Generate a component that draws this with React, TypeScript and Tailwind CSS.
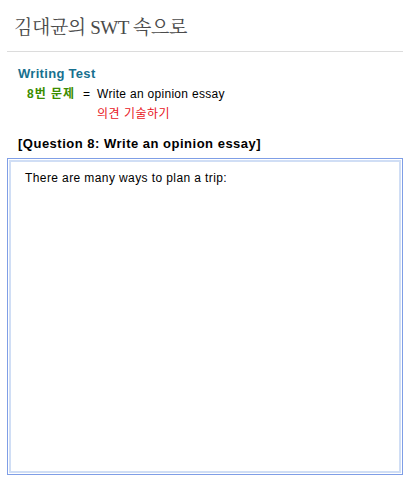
export default function App() {
  return (
    <div className="w-[410px] h-[480px] bg-white relative" style={{ fontFamily: '"Liberation Sans", "Noto Sans CJK KR", sans-serif' }}>
      <div className="px-[7px]">
        <div className="h-[52px] border-b border-[#dcdcdc] pl-[7px] pt-[16px]">
          <div className="text-[19px] leading-[24px] text-[#4a4a4a] tracking-[-0.4px]" style={{ fontFamily: '"Liberation Serif", "Noto Serif CJK KR", "Noto Sans CJK KR", serif' }}>김대균의 SWT 속으로</div>
        </div>
        <div className="pl-[11px] pt-[14px]">
          <div className="text-[13px] leading-[16px] font-bold text-[#17708f] tracking-[0.3px]">Writing Test</div>
          <div className="flex items-start mt-[4px] pl-[9px] text-[12px] leading-[16px]">
            <div className="w-[56px] font-bold text-[#3c8d00] tracking-[1px]">8번 문제</div>
            <div className="w-[14px] text-black">=</div>
            <div>
              <div className="text-black tracking-[0.3px]">Write an opinion essay</div>
              <div className="text-[#e8141c] mt-[4px] tracking-[0.5px]">의견 기술하기</div>
            </div>
          </div>
          <div className="mt-[14px] text-[13px] leading-[16px] font-bold text-black tracking-[0.5px]">[Question 8: Write an opinion essay]</div>
        </div>
        <div className="mt-[6px] h-[317px] border border-[#7f9ee6] p-px">
          <div className="h-full border-2 border-[#d0def5] pl-[14px] pt-[8px] text-[12px] leading-[16px] text-black tracking-[0.4px]">
            There are many ways to plan a trip:
          </div>
        </div>
      </div>
    </div>
  );
}
